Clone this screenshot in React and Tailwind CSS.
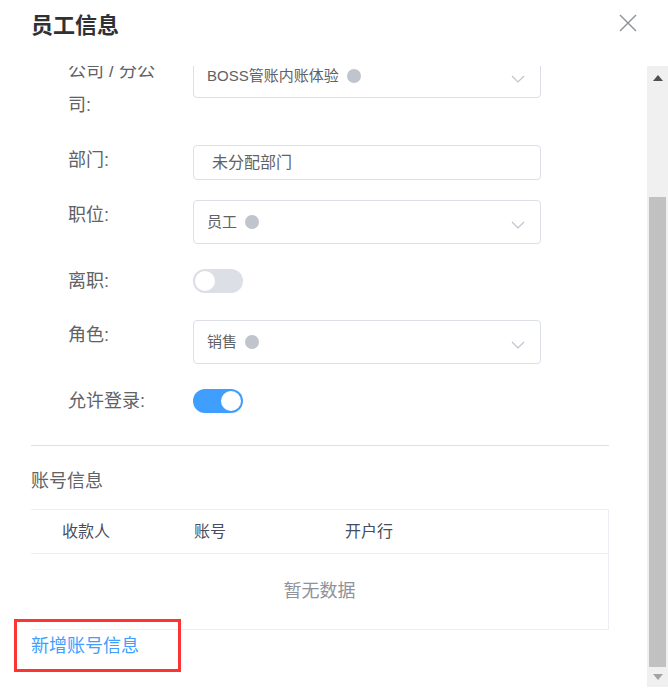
import React from "react";

function Chevron() {
  return (
    <svg width="14" height="8" viewBox="0 0 14 8" className="mt-[6px]">
      <polyline points="1,1 7,7 13,1" fill="none" stroke="#c0c4cc" strokeWidth="1.2" />
    </svg>
  );
}

function Select({ text }) {
  return (
    <div className="w-[348px] h-[44px] border border-[#dcdfe6] rounded-[4px] flex items-center pl-[13px] pr-[15px]">
      <span className="text-[15px] text-[#606266] leading-[20px]">{text}</span>
      <span className="ml-[8px] w-[14px] h-[14px] rounded-full bg-[#c0c4cc]" />
      <div className="flex-1" />
      <Chevron />
    </div>
  );
}

function Switch({ on }) {
  return (
    <div
      className={
        on
          ? "w-[50px] h-[24px] rounded-full bg-[#409eff] relative"
          : "w-[50px] h-[24px] rounded-full bg-[#dcdfe6] relative"
      }
    >
      <div
        className={
          on
            ? "absolute top-[2px] right-[2px] w-[20px] h-[20px] rounded-full bg-white"
            : "absolute top-[2px] left-[2px] w-[20px] h-[20px] rounded-full bg-white"
        }
      />
    </div>
  );
}

export default function App() {
  return (
    <div className="w-[668px] h-[695px] bg-white relative overflow-hidden font-['Liberation_Sans','Noto_Sans_CJK_SC',sans-serif]">
      {/* header */}
      <div className="h-[66px] flex justify-between items-start">
        <div className="pl-[31px] pt-[11px] text-[22px] leading-[30px] font-bold text-[#303133]">员工信息</div>
        <svg width="18" height="18" viewBox="0 0 18 18" className="mt-[14px] mr-[31px]">
          <line x1="1" y1="1" x2="17" y2="17" stroke="#909399" strokeWidth="1.5" />
          <line x1="17" y1="1" x2="1" y2="17" stroke="#909399" strokeWidth="1.5" />
        </svg>
      </div>

      {/* body */}
      <div className="flex h-[621px]">
        <div className="w-[647px] h-[621px] overflow-hidden">
          <div className="pl-[31px] pr-[38px] -mt-[12px]">
            {/* row 1 */}
            <div className="flex pl-[37px]">
              <div className="w-[100px] mr-[25px] text-[18px] leading-[34px] text-[#606266]">公司 / 分公司:</div>
              <Select text="BOSS管账内账体验" />
            </div>
            {/* row 2 */}
            <div className="flex pl-[37px] mt-[23px]">
              <div className="w-[100px] mr-[25px] text-[18px] leading-[31px] text-[#606266]">部门:</div>
              <div className="w-[348px] h-[35px] border border-[#dcdfe6] rounded-[4px] flex items-center pl-[18px]">
                <span className="text-[16px] text-[#606266] leading-[20px]">未分配部门</span>
              </div>
            </div>
            {/* row 3 */}
            <div className="flex pl-[37px] mt-[20px]">
              <div className="w-[100px] mr-[25px] text-[18px] leading-[30px] text-[#606266]">职位:</div>
              <Select text="员工" />
            </div>
            {/* row 4 */}
            <div className="flex pl-[37px] mt-[22px] h-[30px] items-center">
              <div className="w-[100px] mr-[25px] text-[18px] leading-[30px] text-[#606266]">离职:</div>
              <Switch on={false} />
            </div>
            {/* row 5 */}
            <div className="flex pl-[37px] mt-[24px]">
              <div className="w-[100px] mr-[25px] text-[18px] leading-[30px] text-[#606266]">角色:</div>
              <Select text="销售" />
            </div>
            {/* row 6 */}
            <div className="flex pl-[37px] mt-[22px] h-[30px] items-center">
              <div className="w-[100px] mr-[25px] text-[18px] leading-[30px] text-[#606266]">允许登录:</div>
              <Switch on={true} />
            </div>

            <div className="mt-[29px] h-px bg-[#dcdfe6]" />

            <div className="mt-[23px] text-[18px] leading-[24px] text-[#606266]">账号信息</div>

            {/* table */}
            <div className="mt-[16px] border-t border-r border-b border-[#ebeef5]">
              <div className="h-[44px] flex items-center border-b border-[#ebeef5] text-[16px] text-[#454d5e]">
                <div className="w-[132px] pl-[31px]">收款人</div>
                <div className="w-[151px] pl-[31px]">账号</div>
                <div className="flex-1 pl-[31px]">开户行</div>
              </div>
              <div className="h-[75px] flex items-center justify-center text-[18px] text-[#909399]">暂无数据</div>
            </div>

            <div className="mt-[4px] text-[18px] leading-[24px] text-[#409eff]">新增账号信息</div>
          </div>
        </div>

        {/* scrollbar */}
        <div className="w-[21px] h-[621px] bg-[#f0f0f0] flex flex-col items-center">
          <div className="h-[17px] flex items-center justify-center pt-[6px]">
            <svg width="10" height="6" viewBox="0 0 10 6">
              <polygon points="0,6 10,6 5,0" fill="#505050" />
            </svg>
          </div>
          <div className="mt-[114px] w-[17px] h-[470px] bg-[#c1c1c1]" />
          <div className="h-[20px] flex items-center justify-center">
            <svg width="10" height="6" viewBox="0 0 10 6">
              <polygon points="0,0 10,0 5,6" fill="#a3a3a3" />
            </svg>
          </div>
        </div>
      </div>

      {/* red annotation box */}
      <div className="absolute left-[14px] top-[619px] w-[167px] h-[53px] border-[3px] border-[#fb3434]" />
    </div>
  );
}
